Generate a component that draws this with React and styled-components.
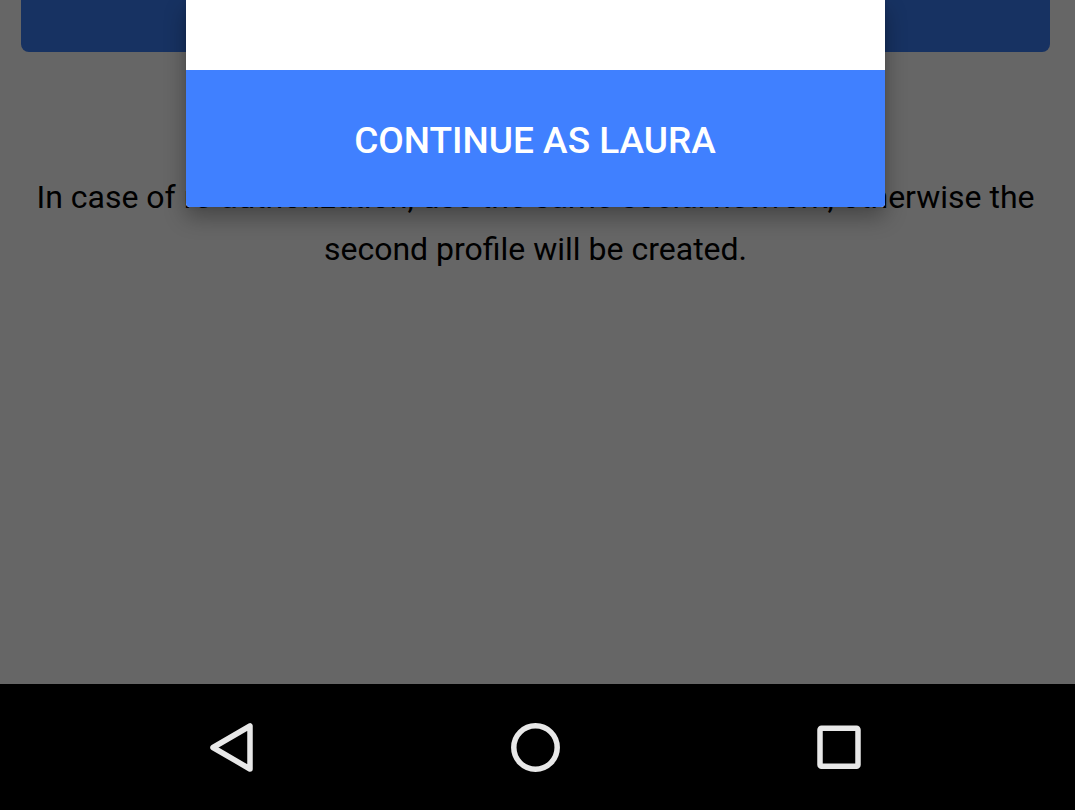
import React from "react";
import styled, { createGlobalStyle } from "styled-components";

const GlobalStyle = createGlobalStyle`
  *, *::before, *::after { box-sizing: border-box; }
  body { margin: 0; background: #000; font-family: Roboto, "Liberation Sans", sans-serif; }
`;

const Screen = styled.div`
  display: flex;
  flex-direction: column;
  min-height: 100vh;
`;

const Page = styled.main`
  position: relative;
  flex: 1;
  padding: 0 25px 0 21px;
  background: #666;
`;

const LoginButton = styled.button`
  display: block;
  width: 100%;
  height: 52px;
  border: 0;
  border-radius: 0 0 8px 8px;
  background: #173262;
`;

const Note = styled.p`
  margin: 0;
  padding: 119px 8px 0;
  color: #000;
  font-size: 32px;
  line-height: 52px;
  text-align: center;
`;

const Overlay = styled.div`
  position: absolute;
  inset: 0;
  display: flex;
  justify-content: center;
  align-items: flex-start;
  padding: 0 26px 0 21px;
`;

const Dialog = styled.section`
  width: 100%;
  max-width: 699px;
  padding-top: 70px;
  border-radius: 0 0 4px 4px;
  background: #fff;
  box-shadow: 0 10px 22px rgba(0, 0, 0, 0.32), 0 0 4px rgba(0, 0, 0, 0.12);
`;

const ContinueButton = styled.button`
  display: block;
  width: 100%;
  padding: 50px 16px 46px;
  border: 0;
  border-radius: 0 0 4px 4px;
  background: #4080ff;
  color: #fff;
  font-family: inherit;
  font-size: 37px;
  font-weight: 500;
  line-height: 41px;
  text-transform: uppercase;
  cursor: pointer;
`;

const NavBar = styled.nav`
  display: flex;
  justify-content: center;
  align-items: center;
  gap: 240px;
  height: 126px;
  background: #000;
`;

const NavButton = styled.button`
  width: 64px;
  height: 64px;
  padding: 0;
  border: 0;
  background: none;
  cursor: pointer;
`;

const NavIcon = styled.svg`
  display: block;
  width: 64px;
  height: 64px;
  fill: none;
  stroke: #e8e8e8;
  stroke-width: 5.5;
  stroke-linejoin: round;
`;

export default function App() {
  return (
    <>
      <GlobalStyle />
      <Screen>
        <Page>
          <LoginButton type="button" aria-label="Log in" />
          <Note>
            In case of re-authorization, use the same social network, otherwise
            the second profile will be created.
          </Note>
          <Overlay>
            <Dialog role="dialog" aria-label="Continue">
              <ContinueButton type="button">Continue as Laura</ContinueButton>
            </Dialog>
          </Overlay>
        </Page>
        <NavBar>
          <NavButton type="button" aria-label="Back">
            <NavIcon viewBox="0 0 64 64">
              <path d="M48 11 V54 L11 32.5 Z" />
            </NavIcon>
          </NavButton>
          <NavButton type="button" aria-label="Home">
            <NavIcon viewBox="0 0 64 64">
              <circle cx="29.5" cy="32.5" r="21.7" />
            </NavIcon>
          </NavButton>
          <NavButton type="button" aria-label="Recent apps">
            <NavIcon viewBox="0 0 64 64">
              <rect x="10" y="13.2" width="38" height="38" rx="1.5" />
            </NavIcon>
          </NavButton>
        </NavBar>
      </Screen>
    </>
  );
}
